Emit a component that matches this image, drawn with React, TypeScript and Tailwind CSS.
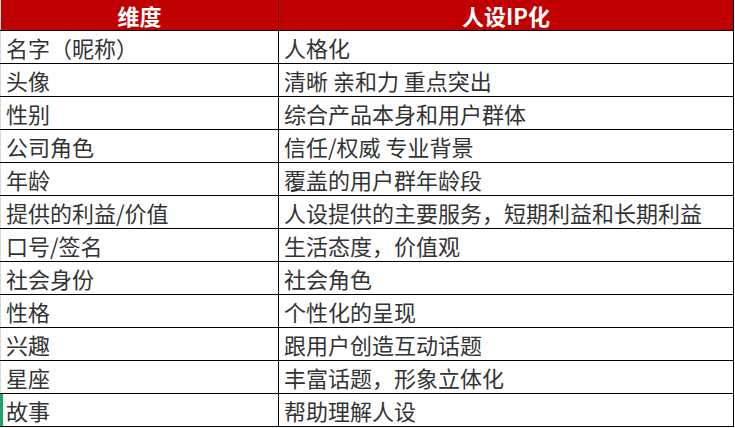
import React from "react";

const rows: [string, string][] = [
  ["名字（昵称）", "人格化"],
  ["头像", "清晰 亲和力 重点突出"],
  ["性别", "综合产品本身和用户群体"],
  ["公司角色", "信任/权威 专业背景"],
  ["年龄", "覆盖的用户群年龄段"],
  ["提供的利益/价值", "人设提供的主要服务，短期利益和长期利益"],
  ["口号/签名", "生活态度，价值观"],
  ["社会身份", "社会角色"],
  ["性格", "个性化的呈现"],
  ["兴趣", "跟用户创造互动话题"],
  ["星座", "丰富话题，形象立体化"],
  ["故事", "帮助理解人设"],
];

export default function App() {
  return (
    <div
      className="w-[735px] h-[428px] bg-white overflow-hidden"
      style={{ fontFamily: '"Microsoft YaHei", "Noto Sans CJK SC", "Noto Sans", sans-serif' }}
    >
      <div className="w-[734px]">
        <div className="flex h-[31px] bg-[#c00000] border-b border-black border-r border-r-black text-white font-bold text-[22px] leading-none">
          <div className="w-[279px] border-l border-l-[#d8d8d8] border-r border-r-[#7a0000] flex items-center justify-center">
            维度
          </div>
          <div className="flex-1 flex items-center justify-center">人设IP化</div>
        </div>
        {rows.map(([a, b], i) => {
          const last = i === rows.length - 1;
          return (
            <div
              key={i}
              className="flex h-[33px] border-b border-black border-r border-r-black text-[22px] leading-none text-[#333333]"
            >
              <div
                className={
                  last
                    ? "w-[279px] border-l-[3px] border-l-[#21a366] border-r border-r-black flex items-center pl-[3px]"
                    : "w-[279px] border-l border-l-[#d8d8d8] border-r border-r-black flex items-center pl-[5px]"
                }
              >
                {a}
              </div>
              <div className="flex-1 flex items-center pl-[5px] whitespace-nowrap">{b}</div>
            </div>
          );
        })}
      </div>
    </div>
  );
}
